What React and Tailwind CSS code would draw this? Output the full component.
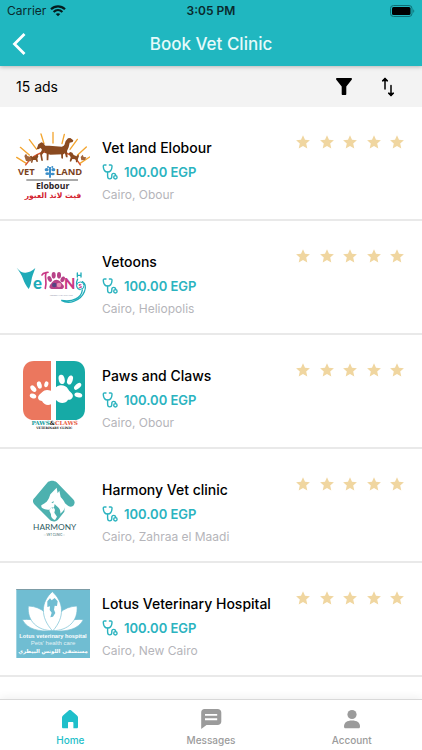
function VetLandLogo() {
  return (
    <svg viewBox="18 18 222 222" className="h-full w-full" role="img" aria-label="Vet land Elobour">
      <g stroke="#f3a52f" strokeWidth="4" strokeLinecap="round">
        <path d="M129 22v32M93 27l9 29M163 28l-7 28M58 44l22 29M202 43l-22 30M31 67l27 23M229 66l-27 25M20 97l29 18M239 96l-29 19" />
      </g>
      <path d="M46 121C68 88 96 78 130 78s64 12 82 43" fill="none" stroke="#d9542b" strokeWidth="4" />
      <path
        d="M80 72l5-14 9-6 6 2 6 9 8 5c13 3 26 1 37 0l11-4 5-16 7-8 7-1 9 7-2 5-9 2-3 14-5 11 2 19-5 0-4-15-5-1 0 20-5-1-1-18-32-1-5 7-1 18-5 0 0-22-7-5-7 11 3 17-5 0-4-21 6-12-4-5-7 4z"
        fill="#8a4a20"
      />
      <path d="M98 62h20l38 3 10-6 3 20-8 9-40 1-16-5z" fill="#8a4a20" />
      <path d="M82 86l-5 7-10 3-3-4-4 2 1 7 3 5-1 7 4 0 2-8 8 0 3 6 4-1-2-9 3-7z" fill="#8a4a20" />
      <path d="M176 85l5-4 6 2 4 7 9 4 5-6 2 5-3 8-2 11-4 0-1-9-10-1-4 8-4-1 3-12z" fill="#8a4a20" />
      <path d="M43 93l5-7 4 7 8 2 5 6-2 8-15-1zM212 96l6-7 3 7 8 1-4 8-11 1z" fill="#a1653b" />
      <g fontFamily="'Open Sans', sans-serif" fontWeight="700" fill="#7b431f">
        <text x="24" y="151" fontSize="28">VET</text>
        <text x="138" y="151" fontSize="28">LAND</text>
      </g>
      <g fill="#3d8fc9">
        <path d="M117 126h6v32h-6z" />
        <ellipse cx="110" cy="134" rx="6" ry="5" />
        <ellipse cx="130" cy="134" rx="6" ry="5" />
        <ellipse cx="112" cy="146" rx="6" ry="4" />
        <ellipse cx="128" cy="147" rx="6" ry="4" />
        <circle cx="114" cy="126" r="3" />
        <circle cx="127" cy="126" r="3" />
      </g>
      <path d="M49 165h155" stroke="#555" strokeWidth="3" />
      <text x="128" y="192" textAnchor="middle" fontFamily="'Open Sans', sans-serif" fontWeight="700" fontSize="26" fill="#2b2326">Elobour</text>
      <text x="129" y="220" textAnchor="middle" fontFamily="'DejaVu Sans', sans-serif" fontWeight="700" fontSize="23" fill="#d3222f">فيت لاند العبور</text>
    </svg>
  );
}

function VetoonsLogo() {
  return (
    <svg viewBox="18 -15 222 222" className="h-full w-full" role="img" aria-label="Vetoons">
      <path d="M20 53c10 12 19 16 27 15 9 0 19-5 29-14-5 15-10 24-12 38-1 10-4 18-8 25-8-10-13-20-17-31-4-13-12-23-19-33z" fill="#1fabb8" />
      <text x="69" y="116" fontFamily="Lato, sans-serif" fontWeight="900" fontSize="50" fill="#1fabb8">e</text>
      <path d="M96 75c4-9 10-5 18-8M108 68c-5 16 4 26-2 47" fill="none" stroke="#c93885" strokeWidth="5" strokeLinecap="round" />
      <g fill="#b74288">
        <ellipse cx="119" cy="87" rx="6" ry="9" transform="rotate(-25 119 87)" />
        <ellipse cx="131" cy="76" rx="6" ry="10" />
        <ellipse cx="147" cy="76" rx="6" ry="10" />
        <ellipse cx="158" cy="88" rx="6" ry="9" transform="rotate(25 158 88)" />
        <path d="M120 105c5-6 10-16 19-16s15 9 21 16c5 7-1 13-7 12H125c-6-1-9-5-5-12z" />
      </g>
      <circle cx="133" cy="105" r="7" fill="#554482" />
      <circle cx="147" cy="105" r="7" fill="#e98eb3" />
      <text x="162" y="116" fontFamily="Lato, sans-serif" fontWeight="900" fontSize="44" fill="#c93885">N</text>
      <text x="119" y="137" fontFamily="Lato, sans-serif" fontSize="7" fill="#8f91a9">VETERINARY CLINICS</text>
      <path d="M202 69v12M213 69v12M202 76h11M203 87c-8 15-3 29 7 32M217 95c19 12 6 49-26 59-12 4-26 3-37-3 35 6 60-7 63-31" fill="none" stroke="#1fabb8" strokeWidth="4" strokeLinecap="round" />
      <circle cx="211" cy="107" r="11" fill="#fff" stroke="#1fabb8" strokeWidth="3" />
      <text x="211" y="114" textAnchor="middle" fontFamily="Lato, sans-serif" fontWeight="900" fontSize="19" fill="#c93885">S</text>
    </svg>
  );
}

function PawsLogo() {
  return (
    <svg viewBox="18 27 222 222" className="h-full w-full" role="img" aria-label="Paws and Claws">
      <path d="M123 33H72c-20 0-33 14-33 33v110c0 21 13 34 33 34h51z" fill="#eb775e" />
      <path d="M138 33h54c20 0 33 14 33 33v110c0 21-13 34-33 34h-54z" fill="#16aaa6" />
      <g fill="#fff">
        <ellipse cx="69" cy="138" rx="10" ry="7" transform="rotate(20 69 138)" />
        <ellipse cx="70" cy="116" rx="7" ry="11" transform="rotate(-40 70 116)" />
        <ellipse cx="88" cy="105" rx="7" ry="11" transform="rotate(-15 88 105)" />
        <ellipse cx="109" cy="103" rx="6" ry="9" transform="rotate(15 109 103)" />
        <path d="M123 122c-11-4-20-3-26 4-4 5-10 7-12 13-3 8 3 14 11 14 4 9 15 15 27 10z" />
        <ellipse cx="155" cy="88" rx="9" ry="14" transform="rotate(-12 155 88)" />
        <ellipse cx="180" cy="90" rx="8" ry="14" transform="rotate(20 180 90)" />
        <ellipse cx="203" cy="109" rx="7" ry="13" transform="rotate(48 203 109)" />
        <ellipse cx="205" cy="135" rx="12" ry="7" transform="rotate(15 205 135)" />
        <path d="M138 112c12-10 29-7 36 5 4 8 11 10 14 17 3 9-5 16-14 15-6 12-25 14-36 1z" />
      </g>
      <text x="134" y="226" textAnchor="middle" fontFamily="'DejaVu Serif', serif" fontWeight="900" fontSize="17">
        <tspan fill="#169c9b">PAWS</tspan>
        <tspan fill="#111">&amp;</tspan>
        <tspan fill="#e75c43">CLAWS</tspan>
      </text>
      <text x="133" y="238" textAnchor="middle" fontFamily="'DejaVu Serif', serif" fontWeight="700" fontSize="9" fill="#111">VETERINARY CLINIC</text>
    </svg>
  );
}

function HarmonyLogo() {
  return (
    <svg viewBox="18 9 222 222" className="h-full w-full" role="img" aria-label="Harmony Vet clinic">
      <path
        d="M113 37c8-6 19-6 27 0l48 49c7 6 8 15 2 21-6 5-13 4-18-1l-7-6-2 25-19 24c-7 7-17 7-24 1L75 105c-8-7-8-16-1-22z"
        fill="#4db1af"
      />
      <path
        d="M121 73l19-20 3 17 5-8 4 19c7 9 14 14 14 26-1 9-6 17-15 24 1-12-4-18-12-24l-5-5-2 10-9 1-4 6c-8 0-13-1-18-3-5-1-8-5-7-10l10-6c8-5 12-11 17-27z"
        fill="#fff"
      />
      <path d="M124 97l8-3-3 6z" fill="#4db1af" />
      <path d="M118 122l5-10 6 4 2-5 4 9-2 8 8 12-6 10c-8-3-13-9-12-17z" fill="#fff" />
      <text x="134" y="179" textAnchor="middle" fontFamily="Lato, sans-serif" fontSize="25" fill="#305d63">HARMONY</text>
      <path d="M101 195h8M157 195h8" stroke="#a6bdc0" strokeWidth="1" />
      <text x="133" y="198" textAnchor="middle" fontFamily="Lato, sans-serif" fontSize="9" fill="#305d63">VET CLINIC</text>
    </svg>
  );
}

function LotusLogo() {
  return (
    <svg viewBox="18 21 222 222" className="h-full w-full" role="img" aria-label="Lotus Veterinary Hospital">
      <path d="M19 27h221v207H19z" fill="#70bdd2" />
      <path d="M19 27h221v3H19z" fill="#7d9ca6" />
      <g fill="#fff" stroke="#70bdd2" strokeWidth="2">
        <path d="M37 119c34-4 65 6 87 34-35 1-71-3-87-34zM220 119c-34-4-65 6-87 34 35 1 71-3 87-34z" />
        <path d="M55 78c42 2 70 28 73 74-46 0-77-29-73-74zM201 78c-42 2-70 28-73 74 46 0 77-29 73-74z" />
        <path d="M127 35c34 30 39 76 1 118-39-42-35-88-1-118z" />
      </g>
      <path d="M112 64l8-9 5 6 9-7 9 10-2 14-7-1-2 12 4 10-7 11-8 2 4-14-6-8 1-11-8 2z" fill="#70bdd2" />
      <g textAnchor="middle" fill="#fff">
        <text x="129" y="174" fontFamily="'Liberation Sans', sans-serif" fontWeight="700" fontSize="17">Lotus veterinary hospital</text>
        <text x="129" y="196" fontFamily="'Liberation Sans', sans-serif" fontSize="18" opacity="0.8">Pets' health care</text>
        <text x="129" y="218" fontFamily="'DejaVu Sans', sans-serif" fontWeight="700" fontSize="16">مستشفى اللوتس البيطري</text>
      </g>
    </svg>
  );
}

const clinics = [
  { name: 'Vet land Elobour', price: '100.00 EGP', location: 'Cairo, Obour', Logo: VetLandLogo },
  { name: 'Vetoons', price: '100.00 EGP', location: 'Cairo, Heliopolis', Logo: VetoonsLogo },
  { name: 'Paws and Claws', price: '100.00 EGP', location: 'Cairo, Obour', Logo: PawsLogo },
  { name: 'Harmony Vet clinic', price: '100.00 EGP', location: 'Cairo, Zahraa el Maadi', Logo: HarmonyLogo },
  { name: 'Lotus Veterinary Hospital', price: '100.00 EGP', location: 'Cairo, New Cairo', Logo: LotusLogo },
];

function Stethoscope() {
  return (
    <svg viewBox="0 0 16 16" className="h-4 w-4" fill="none" stroke="currentColor" strokeWidth="1.4" strokeLinecap="round" strokeLinejoin="round">
      <path d="M4 1H2.600C1.600 1 1.200 1.600 1.300 2.600c.2 3.200 1.600 5.400 4.300 5.400s4.200-2.200 4.400-5.400C10.100 1.600 9.700 1 8.700 1H7.400" />
      <path d="M5.600 8.200v3.800c0 1.800.9 2.900 2.200 2.900s2-1 2-2.300v-1.200c0-1.300.7-2 1.900-2s2 .8 2 2.200" />
      <circle cx="13.400" cy="13.300" r="1.700" />
    </svg>
  );
}

function Star() {
  return (
    <svg viewBox="0 0 14 14" className="h-[14px] w-[14px]" fill="#f0d6a0">
      <path d="M7 .2l2 4.500 4.900.5-3.700 3.300 1.100 4.900L7 10.900l-4.300 2.500 1.100-4.900L.1 5.200 5 4.700z" />
    </svg>
  );
}

function ClinicRow({ clinic }) {
  const { name, price, location, Logo } = clinic;
  return (
    <li className="flex items-start border-b-2 border-[#e9e9e9] pr-[18px] pb-[13px] pl-4">
      <div className="mt-6 h-[74px] w-[74px] shrink-0">
        <Logo />
      </div>
      <div className="min-w-0 flex-1 pt-[29px] pl-3">
        <h2 className="text-[14px] leading-6 font-medium whitespace-nowrap text-black">{name}</h2>
        <p className="flex items-center gap-[6px] text-[13px] leading-6 font-semibold text-[#2bb3bf]">
          <Stethoscope />
          {price}
        </p>
        <p className="text-[12px] leading-[22px] text-[#b5b5ba]">{location}</p>
      </div>
      <div className="mt-7 flex w-[108px] shrink-0 justify-between" role="img" aria-label="No rating yet">
        {[1, 2, 3, 4, 5].map((n) => (
          <Star key={n} />
        ))}
      </div>
    </li>
  );
}

function Header() {
  return (
    <header className="relative z-10 bg-[#20b7c0] shadow-[0_1px_4px_rgba(0,0,0,0.25)]">
      <div className="grid h-[22px] grid-cols-3 items-center px-[7px] text-[12px] text-[#0a2a2d]">
        <div className="flex items-center gap-1">
          <span>Carrier</span>
          <svg viewBox="0 0 16 12" className="h-3 w-4" fill="none" stroke="#041c1e" strokeWidth="2.200">
            <path d="M1 4.300c4-3.900 10-3.900 14 0M3.600 7c2.600-2.400 6.200-2.400 8.800 0" />
            <path d="M8 11.300L5.700 9c1.300-1.100 3.300-1.100 4.600 0z" fill="#041c1e" stroke="none" />
          </svg>
        </div>
        <span className="text-center font-semibold">3:05 PM</span>
        <svg viewBox="0 0 25 12" className="h-3 w-[25px] justify-self-end">
          <rect x=".5" y=".5" width="21.500" height="11" rx="3" fill="none" stroke="#0e6e74" />
          <rect x="2" y="2" width="18.500" height="8" rx="1.500" fill="#000" />
          <path d="M23.300 4.200c1.300.5 1.300 3.100 0 3.600z" fill="#0e6e74" />
        </svg>
      </div>
      <div className="grid h-11 grid-cols-[48px_1fr_48px] items-center">
        <button type="button" aria-label="Back" className="flex h-11 items-center pl-3 text-white">
          <svg viewBox="0 0 14 22" className="h-[22px] w-[14px]" fill="none" stroke="currentColor" strokeWidth="2.800">
            <path d="M12.500 1L2.500 11l10 10" />
          </svg>
        </button>
        <h1 className="text-center text-[17px] leading-6 font-medium text-[#e6fafa]">Book Vet Clinic</h1>
      </div>
    </header>
  );
}

function Toolbar() {
  return (
    <div className="flex h-[41px] shrink-0 items-center justify-between bg-[#f3f3f3] pr-[26px] pl-4">
      <p className="text-[14px] text-black">15 ads</p>
      <div className="flex items-center gap-7">
        <button type="button" aria-label="Filter">
          <svg viewBox="0 0 16 17" className="h-[17px] w-4">
            <path d="M1 0h14c1 0 1.300 1 .7 1.700L10.300 8.500V16c0 .7-.4 1-1 1H6.700c-.6 0-1-.3-1-1V8.500L.3 1.700C-.3 1 0 0 1 0z" />
          </svg>
        </button>
        <button type="button" aria-label="Sort">
          <svg viewBox="0 0 16 20" className="h-5 w-4" fill="none" stroke="#000" strokeWidth="1.500" strokeLinecap="round">
            <path d="M5 12V3M11 8.500V17" />
            <path d="M5 .8L8 4.200H2zM11 19.200L14 15.800H8z" fill="#000" stroke="none" />
            <path d="M2.700 3.800L5 1.500l2.300 2.300M8.700 16.200l2.300 2.300 2.300-2.300" />
          </svg>
        </button>
      </div>
    </div>
  );
}

function TabBar() {
  return (
    <nav className="grid shrink-0 grid-cols-3 border-t border-[#d9d9d9] bg-white pt-2 pb-[2px] text-[10px] leading-4 font-medium text-[#9b9b9b] shadow-[0_-2px_8px_rgba(0,0,0,0.06)]">
      <a href="#home" className="flex flex-col items-center gap-[2px] text-[#1fbfca]">
        <svg viewBox="0 0 22 22" className="h-[22px] w-[22px]" fill="currentColor">
          <path d="M10 2.300c.6-.5 1.400-.5 2 0l6 5.100c.7.6 1 1.200 1 2V19c0 .8-.5 1.300-1.300 1.300h-3.300V15c0-.7-.4-1-1-1H10c-.6 0-1 .3-1 1v5.300H4.300C3.500 20.300 3 19.800 3 19V9.400c0-.8.300-1.400 1-2z" />
        </svg>
        Home
      </a>
      <a href="#messages" className="flex flex-col items-center gap-[2px]">
        <svg viewBox="0 0 22 22" className="h-[22px] w-[22px]" fill="currentColor">
          <path d="M4.500 1h13C19.800 1 21.300 2.500 21.300 4.500v9c0 2-1.500 3.500-3.800 3.500H6.500l-5.300 4V4.500C1.200 2.500 2.500 1 4.500 1z" />
          <path d="M5 6.900h12.200M5 11.200h12.200" stroke="#fff" strokeWidth="1.900" />
        </svg>
        Messages
      </a>
      <a href="#account" className="flex flex-col items-center gap-[2px]">
        <svg viewBox="0 0 22 22" className="h-[22px] w-[22px]" fill="currentColor">
          <circle cx="11" cy="6.500" r="4.600" />
          <path d="M3 18.500c0-4 3-6 8-6s8 2 8 6c0 1.300-.6 1.800-1.600 1.800H4.600C3.600 20.300 3 19.800 3 18.500z" />
        </svg>
        Account
      </a>
    </nav>
  );
}

export default function App() {
  return (
    <div className="flex h-screen flex-col bg-white font-['Inter',sans-serif]">
      <Header />
      <Toolbar />
      <main className="min-h-0 flex-1 overflow-y-auto">
        <ul>
          {clinics.map((clinic) => (
            <ClinicRow key={clinic.name} clinic={clinic} />
          ))}
        </ul>
      </main>
      <TabBar />
    </div>
  );
}
